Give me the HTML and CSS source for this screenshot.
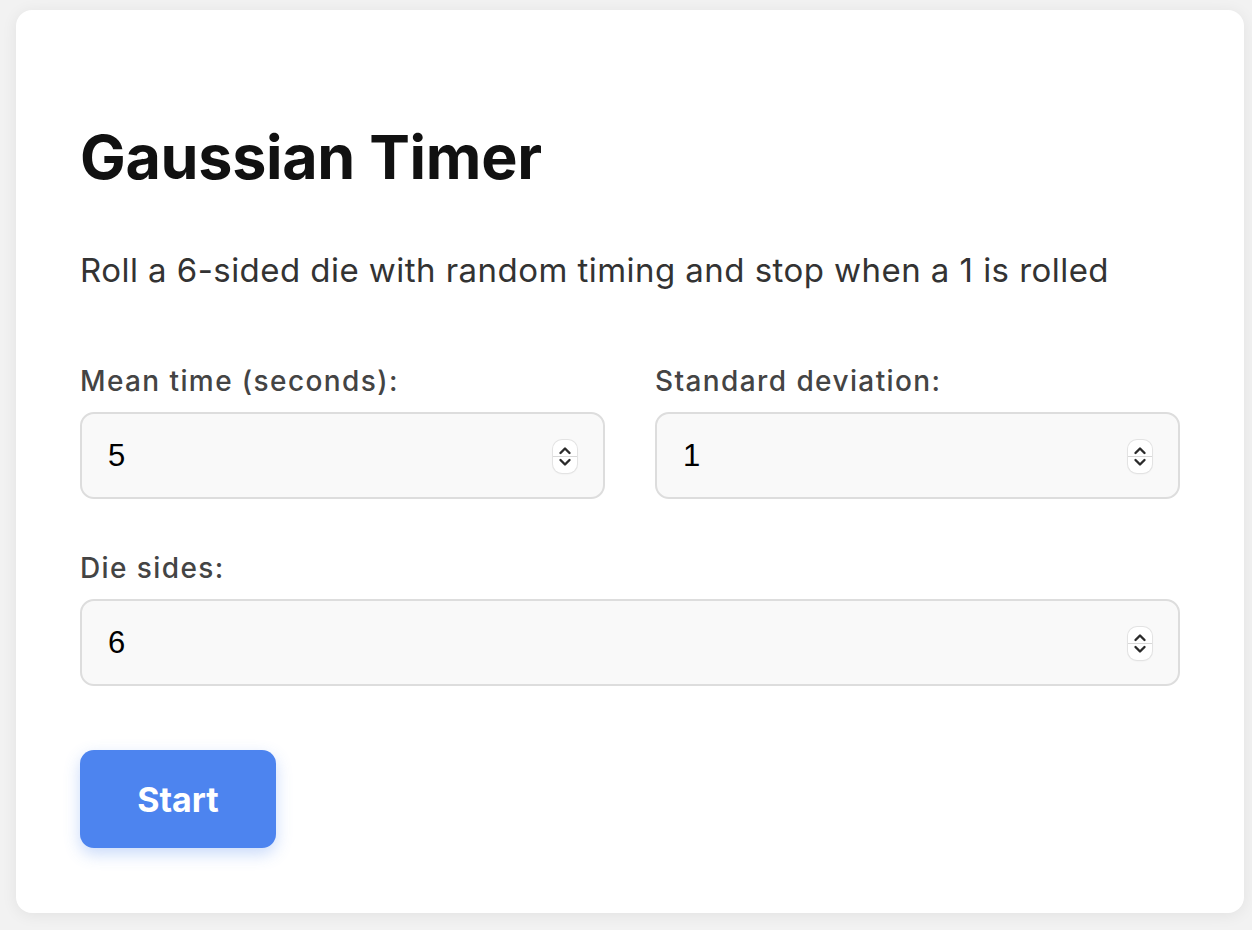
FILE: index.html
```html
<!DOCTYPE html>
<html lang="en">
<head>
<meta charset="utf-8">
<title>Gaussian Timer</title>
<link rel="stylesheet" href="styles.css">
</head>
<body>
<main class="card">
  <h1 class="title">Gaussian Timer</h1>
  <p class="subtitle">Roll a 6-sided die with random timing and stop when a 1 is rolled</p>
  <div class="fields">
    <div class="field">
      <label class="label" for="mean">Mean time (seconds):</label>
      <div class="input-wrap">
        <input class="input" id="mean" type="number" value="5">
        <span class="spinner"><svg viewBox="0 0 24 33" width="24" height="33"><path d="M7.5 13 L12 8.5 L16.5 13" /><path d="M7.5 20 L12 24.5 L16.5 20" /></svg></span>
      </div>
    </div>
    <div class="field">
      <label class="label" for="sd">Standard deviation:</label>
      <div class="input-wrap">
        <input class="input" id="sd" type="number" value="1">
        <span class="spinner"><svg viewBox="0 0 24 33" width="24" height="33"><path d="M7.5 13 L12 8.5 L16.5 13" /><path d="M7.5 20 L12 24.5 L16.5 20" /></svg></span>
      </div>
    </div>
    <div class="field field-wide">
      <label class="label" for="sides">Die sides:</label>
      <div class="input-wrap">
        <input class="input" id="sides" type="number" value="6">
        <span class="spinner"><svg viewBox="0 0 24 33" width="24" height="33"><path d="M7.5 13 L12 8.5 L16.5 13" /><path d="M7.5 20 L12 24.5 L16.5 20" /></svg></span>
      </div>
    </div>
  </div>
  <button class="start" type="button">Start</button>
</main>
</body>
</html>
```
FILE: styles.css
```css
html, body {
  margin: 0;
  height: 100%;
}
body {
  background: #f2f2f2;
  padding: 10px 8px 0 16px;
  box-sizing: border-box;
  font-family: Inter, "Noto Sans", sans-serif;
}
.card {
  background: #ffffff;
  border-radius: 16px;
  box-shadow: 0 2px 16px rgba(0, 0, 0, 0.07);
  padding: 111px 64px 64px;
  height: 903px;
  box-sizing: border-box;
}
.title {
  margin: 0;
  font-size: 61px;
  line-height: 72px;
  font-weight: 700;
  color: #111111;
  letter-spacing: -0.3px;
}
.subtitle {
  margin: 57px 0 0;
  font-size: 33px;
  line-height: 40px;
  color: #333333;
  font-weight: 400;
  letter-spacing: 0.45px;
}
.fields {
  margin-top: 75px;
  display: grid;
  grid-template-columns: 1fr 1fr;
  column-gap: 50px;
  row-gap: 53px;
}
.field-wide {
  grid-column: 1 / -1;
}
.label {
  display: block;
  font-size: 28px;
  line-height: 32px;
  font-weight: 500;
  color: #444444;
  letter-spacing: 1.4px;
  margin-bottom: 15px;
}
.input-wrap {
  position: relative;
}
.input {
  display: block;
  width: 100%;
  box-sizing: border-box;
  height: 87px;
  border: 2px solid #dddddd;
  border-radius: 14px;
  background: #f9f9f9;
  padding: 0 26px;
  font-family: "Liberation Sans", Arial, sans-serif;
  font-size: 31px;
  color: #000000;
  -moz-appearance: textfield;
  appearance: textfield;
  outline: none;
}
.input::-webkit-inner-spin-button,
.input::-webkit-outer-spin-button {
  -webkit-appearance: none;
  margin: 0;
}
.spinner {
  position: absolute;
  right: 28px;
  top: 28px;
  width: 24px;
  height: 33px;
  border-radius: 9px;
  background: #ffffff;
  box-shadow: 0 0 0 1px #e3e3e3, 0 1px 2px rgba(0, 0, 0, 0.08);
  display: block;
}
.spinner::after {
  content: "";
  position: absolute;
  left: 0;
  right: 0;
  top: 16px;
  height: 1px;
  background: #d8d8d8;
}
.spinner svg {
  display: block;
}
.spinner path {
  fill: none;
  stroke: #2a2a2a;
  stroke-width: 2.4;
  stroke-linecap: round;
  stroke-linejoin: round;
}
.start {
  display: block;
  margin-top: 64px;
  width: 196px;
  height: 98px;
  border: none;
  border-radius: 14px;
  background: #4d84ef;
  color: #ffffff;
  font-family: Inter, "Noto Sans", sans-serif;
  font-size: 34px;
  font-weight: 700;
  box-shadow: 0 6px 16px rgba(77, 132, 239, 0.3);
  cursor: pointer;
}
```
